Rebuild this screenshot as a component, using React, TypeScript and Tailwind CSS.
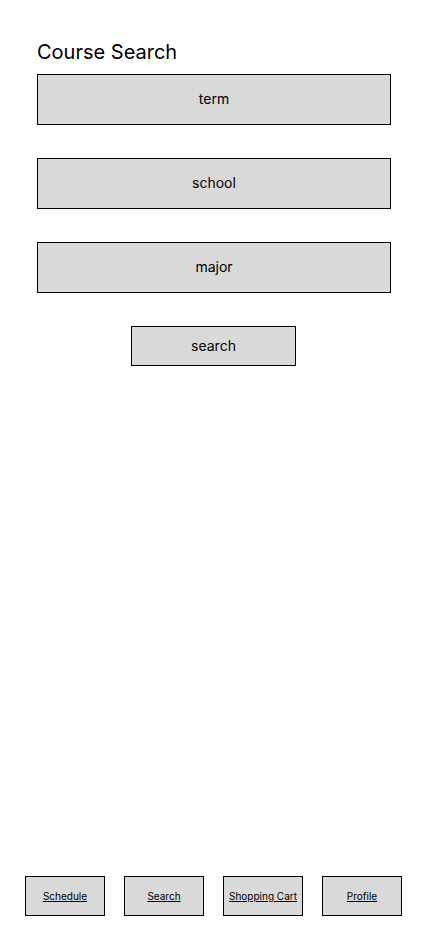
import React from "react";

const FIELDS = ["term", "school", "major"];
const NAV = ["Schedule", "Search", "Shopping Cart", "Profile"];

export default function App() {
  return (
    <div
      className="flex h-[926px] w-[428px] flex-col bg-white text-black"
      style={{ fontFamily: "Inter, 'Noto Sans', sans-serif" }}
    >
      <div className="flex flex-col px-[37px] pt-[40px]">
        <h1 className="text-[20px] leading-[24px] font-normal">Course Search</h1>
        <div className="mt-[10px] flex flex-col gap-[33px]">
          {FIELDS.map((f) => (
            <div
              key={f}
              className="flex h-[51px] w-[354px] items-center justify-center border border-black bg-[#d9d9d9] pb-[2px] text-[14px]"
            >
              {f}
            </div>
          ))}
        </div>
        <div className="mt-[33px] flex pl-[94px]">
          <button className="flex h-[40px] w-[165px] items-center justify-center border border-black bg-[#d9d9d9] pb-[2px] text-[14px]">
            search
          </button>
        </div>
      </div>
      <div className="mt-auto flex gap-[19px] pb-[10px] pl-[25px]">
        {NAV.map((n) => (
          <a
            key={n}
            className="flex h-[40px] w-[80px] items-center justify-center border border-black bg-[#d9d9d9] text-[10px] underline"
          >
            {n}
          </a>
        ))}
      </div>
    </div>
  );
}
